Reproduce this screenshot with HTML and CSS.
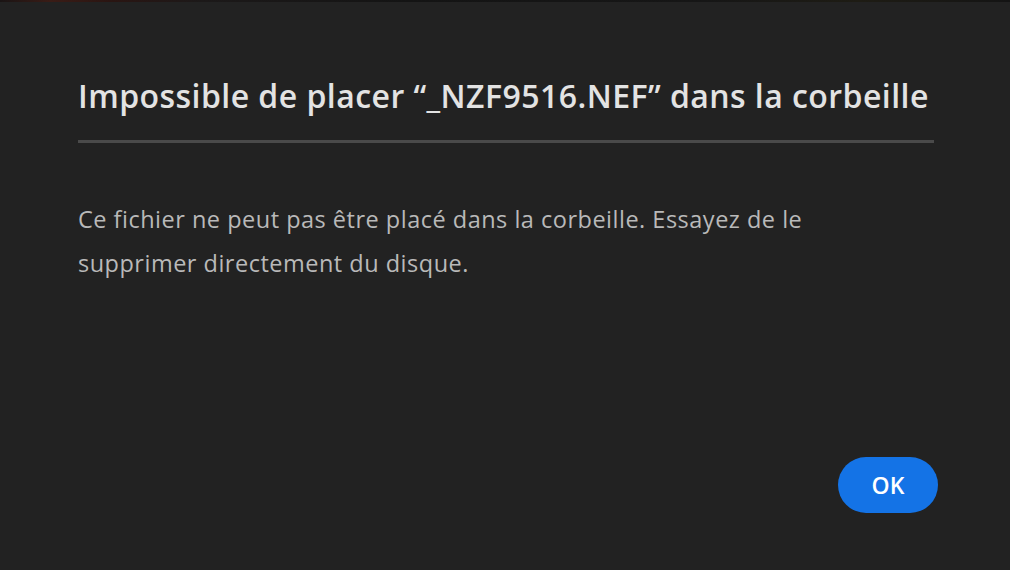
FILE: index.html
```html
<!DOCTYPE html>
<html lang="fr">
<head>
  <meta charset="UTF-8">
  <meta name="viewport" content="width=device-width, initial-scale=1.0">
  <title>Impossible de placer dans la corbeille</title>
  <link rel="stylesheet" href="styles.css">
</head>
<body>
  <div class="backdrop"></div>
  <div class="dialog">
    <h1 class="dialog-title">Impossible de placer “_NZF9516.NEF” dans la corbeille</h1>
    <hr class="divider">
    <p class="dialog-text">Ce fichier ne peut pas être placé dans la corbeille. Essayez de le supprimer directement du disque.</p>
    <div class="actions">
      <button class="btn-ok">OK</button>
    </div>
  </div>
</body>
</html>
```

FILE: styles.css
```css
html, body { margin: 0; height: 100%; }
body { background: #222222; font-family: "Open Sans", "Noto Sans", sans-serif; display: flex; flex-direction: column; overflow: hidden; }
.backdrop { height: 2px; background: linear-gradient(90deg, #1a1414 0%, #3a1c16 5%, #2a1512 11%, #1c1919 20%, #141414 40%, #161616 70%, #1e1c14 85%, #141414 100%); }
.dialog { flex: 1; display: flex; flex-direction: column; padding: 74px 76px 57px 78px; }
.dialog-title { margin: 0; font-size: 32px; font-weight: 600; color: #e3e3e3; line-height: 40px; letter-spacing: 0.45px; }
.divider { margin: 24px 0 0; border: none; height: 3px; background: #4a4a4a; }
.dialog-text { margin: 54px 0 0; font-size: 23.5px; line-height: 44px; color: #b9b9b9; letter-spacing: 0.5px; max-width: 790px; }
.actions { margin-top: auto; display: flex; justify-content: flex-end; }
.btn-ok { width: 100px; height: 56px; margin-right: -4px; border: none; border-radius: 28px; background: #1473e6; color: #ffffff; font-family: inherit; font-size: 23px; font-weight: 600; cursor: pointer; }
```
